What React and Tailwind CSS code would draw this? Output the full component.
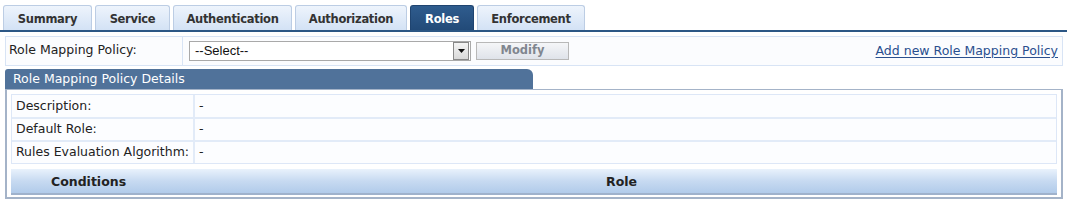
const tabs = [
  { label: "Summary", w: 89 },
  { label: "Service", w: 75 },
  { label: "Authentication", w: 119 },
  { label: "Authorization", w: 112 },
  { label: "Roles", w: 64, active: true },
  { label: "Enforcement", w: 108 },
];

const details = [
  ["Description:", "-"],
  ["Default Role:", "-"],
  ["Rules Evaluation Algorithm:", "-"],
];

export default function App() {
  return (
    <div className="w-[1069px] h-[201px] bg-white text-[12.5px] text-[#222] font-['DejaVu_Sans',sans-serif] overflow-hidden">
      {/* Tabs */}
      <div className="flex items-end gap-[3px] pl-[3px] pt-[5px] border-b-2 border-[#2c5785] w-[1067px]">
        {tabs.map((t) => (
          <div
            key={t.label}
            style={{ width: t.w }}
            className={
              t.active
                ? "h-[25px] pt-[3px] flex items-center justify-center rounded-t-[3px] border border-b-0 border-[#1f4470] bg-gradient-to-b from-[#2f5c8e] to-[#224a78] text-white font-bold text-[11.5px] tracking-[-0.3px]"
                : "h-[25px] pt-[3px] flex items-center justify-center rounded-t-[3px] border border-b-0 border-[#bccde4] bg-gradient-to-b from-[#eef4fc] to-[#d3e2f5] text-[#333] font-bold text-[11.5px] tracking-[-0.3px]"
            }
          >
            {t.label}
          </div>
        ))}
      </div>

      {/* Policy selector row */}
      <div className="mt-[4px] ml-[5px] w-[1058px] h-[30px] flex items-center border border-[#d8e4f5] bg-[#fbfcfe]">
        <div className="w-[177px] h-full flex items-center pl-[3px] pb-[2px] border-r border-[#d8e4f5]">
          Role Mapping Policy:
        </div>
        <div className="ml-[6px] w-[282px] h-[20px] flex items-center justify-between border border-[#a9a9a9] bg-white">
          <span className="pl-[5px] text-[13px] text-[#111] font-['Liberation_Sans',sans-serif]">--Select--</span>
          <div className="w-[16px] h-[18px] mr-[1px] flex items-center justify-center border border-[#888] bg-gradient-to-b from-[#f4f4f4] to-[#d9d9d9]">
            <svg width="7" height="4" viewBox="0 0 7 4"><path d="M0 0h7L3.5 4z" fill="#111" /></svg>
          </div>
        </div>
        <div className="ml-[5px] w-[93px] h-[18px] flex items-center justify-center border border-[#b8b8b8] bg-gradient-to-b from-[#f5f6f8] to-[#dfe3ea] text-[#80868f] font-bold text-[11.5px]">
          Modify
        </div>
        <a className="ml-auto mr-[4px] text-[#2a4f8e] underline underline-offset-2">
          Add new Role Mapping Policy
        </a>
      </div>

      {/* Details */}
      <div className="mt-[3px] ml-[5px] w-[528px] h-[20px] flex items-center pl-[8px] rounded-tl-[3px] rounded-tr-[6px] bg-[#50729a] text-white">
        Role Mapping Policy Details
      </div>
      <div className="ml-[5px] w-[1058px] border-2 border-t-[1px] border-[#a4b3c8] px-[4px] pt-[4px] pb-[2px] bg-white">
        <div className="border border-[#dde7f7]">
          {details.map(([k, v], i) => (
            <div
              key={k}
              className={
                i === 0
                  ? "flex h-[22px] bg-[#fcfdff]"
                  : "flex h-[23px] bg-[#fcfdff] border-t-2 border-[#e2ebf8]"
              }
            >
              <div className="w-[183px] flex items-center pl-[4px] border-r-2 border-[#e2ebf8]">{k}</div>
              <div className="flex items-center pl-[4px]">{v}</div>
            </div>
          ))}
        </div>
        <div className="mt-[5px] h-[26px] pt-[2px] flex items-center bg-gradient-to-b from-[#e9f2fc] via-[#c7daf1] to-[#b1cbea] border-b-2 border-[#9fb2cc] font-bold text-[#222] text-[12.5px]">
          <div className="w-[570px] pl-[40px]">Conditions</div>
          <div className="pl-[25px]">Role</div>
        </div>
      </div>
    </div>
  );
}
